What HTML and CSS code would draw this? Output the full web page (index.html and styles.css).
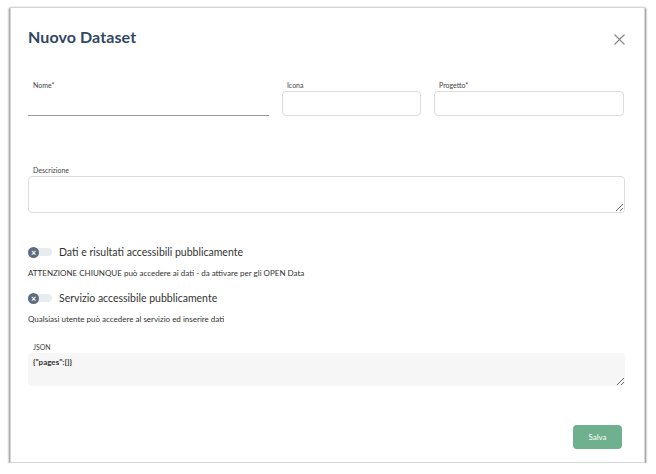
FILE: index.html
```html
<!DOCTYPE html>
<html lang="it">
<head>
  <meta charset="UTF-8" />
  <meta name="viewport" content="width=device-width, initial-scale=1.0" />
  <title>Nuovo Dataset</title>
  <link rel="stylesheet" href="styles.css">
</head>
<body>
  <div id="modal">
    <!-- intestazione -->
    <div class="modal-header">
      <h1>Nuovo Dataset</h1>
      <button class="close-btn" aria-label="Chiudi">
        <svg width="11" height="11" viewBox="0 0 11 11"><path d="M0.5 0.5L10.5 10.5M10.5 0.5L0.5 10.5" stroke="#8a8a8a" stroke-width="1.2" fill="none"/></svg>
      </button>
    </div>

    <!-- campi principali -->
    <div class="row-fields">
      <div class="field">
        <label>Nome*</label>
        <input type="text" class="line-input" />
      </div>
      <div class="field">
        <label>Icona</label>
        <input type="text" class="box-input" />
      </div>
      <div class="field">
        <label>Progetto*</label>
        <input type="text" class="box-input" />
      </div>
    </div>

    <div class="field desc-field">
      <label>Descrizione</label>
      <textarea class="box-input desc-input"></textarea>
    </div>

    <!-- opzioni pubblicazione -->
    <div class="toggle-row first">
      <span class="toggle"><span class="knob">×</span></span>
      <span class="toggle-text">Dati e risultati accessibili pubblicamente</span>
    </div>
    <p class="hint">ATTENZIONE CHIUNQUE può accedere ai dati - da attivare per gli OPEN Data</p>

    <div class="toggle-row">
      <span class="toggle"><span class="knob">×</span></span>
      <span class="toggle-text">Servizio accessibile pubblicamente</span>
    </div>
    <p class="hint">Qualsiasi utente può accedere al servizio ed inserire dati</p>

    <div class="field json-field">
      <label>JSON</label>
      <textarea class="json-input">{"pages":[]}</textarea>
    </div>

    <div class="modal-footer">
      <button class="save-btn">Salva</button>
    </div>
  </div>
</body>
</html>
```

FILE: styles.css
```css
body {
  font-family: "Lato", "Open Sans", sans-serif;
  background: #fff;
  color: #333;
  margin: 0;
  padding: 7px 11px 0 10px;
}
#modal {
  height: 456px;
  box-sizing: border-box;
  background: #fff;
  border: 1px solid #d6d6d6;
  box-shadow: -1px 1px 2px rgba(0,0,0,0.45), 1px 1px 2px rgba(0,0,0,0.45);
  padding: 16px 19px 0 17px;
}
.modal-header {
  display: flex;
  align-items: center;
  justify-content: space-between;
  height: 24px;
}
.modal-header h1 {
  margin: 0;
  font-size: 16px;
  font-weight: 700;
  color: #2f4763;
  letter-spacing: 0.1px;
}
.close-btn {
  border: none;
  background: none;
  padding: 0;
  margin-top: 6px;
  display: flex;
}
.row-fields {
  display: grid;
  grid-template-columns: 241px 139px 190px;
  column-gap: 13px;
  margin-top: 32px;
}
.field {
  display: flex;
  flex-direction: column;
}
.field label {
  font-size: 7px;
  color: #444;
  padding-left: 5px;
  height: 10px;
  line-height: 10px;
  margin-bottom: 1px;
}
.box-input {
  height: 25px;
  box-sizing: border-box;
  border: 1px solid #dcdcdc;
  border-radius: 4px;
  background: #fff;
  font-family: inherit;
}
.line-input {
  height: 25px;
  box-sizing: border-box;
  border: none;
  border-bottom: 1px solid #9a9a9a;
  background: transparent;
}
.desc-field {
  margin-top: 49px;
}
.desc-input {
  height: 37px;
  resize: vertical;
}
.toggle-row {
  display: flex;
  align-items: center;
  height: 14px;
  margin-top: 13px;
}
.toggle-row.first {
  margin-top: 32px;
}
.toggle {
  position: relative;
  width: 24px;
  height: 8px;
  background: #e8ebef;
  border-radius: 4px;
  margin-right: 7px;
}
.toggle .knob {
  position: absolute;
  left: 0;
  top: -1.5px;
  width: 11px;
  height: 11px;
  border-radius: 50%;
  background: #5c6b7d;
  color: #fff;
  font-size: 9px;
  line-height: 11px;
  text-align: center;
  font-weight: 700;
}
.toggle-text {
  font-size: 10.5px;
  color: #333;
}
.hint {
  margin: 9px 0 0;
  font-size: 8px;
  color: #333;
  line-height: 10px;
}
.json-field {
  margin-top: 18px;
}
.json-input {
  height: 33px;
  box-sizing: border-box;
  border: none;
  border-radius: 4px;
  background: #f6f6f6;
  font-family: inherit;
  font-size: 8px;
  font-weight: 700;
  color: #333;
  padding: 4px 5px;
  resize: vertical;
}
.modal-footer {
  display: flex;
  justify-content: flex-end;
  margin-top: 39px;
  padding-right: 3px;
}
.save-btn {
  width: 49px;
  height: 24px;
  border: none;
  border-radius: 4px;
  background: #6fb08f;
  color: #fff;
  font-family: inherit;
  font-size: 8px;
  cursor: pointer;
}
```
